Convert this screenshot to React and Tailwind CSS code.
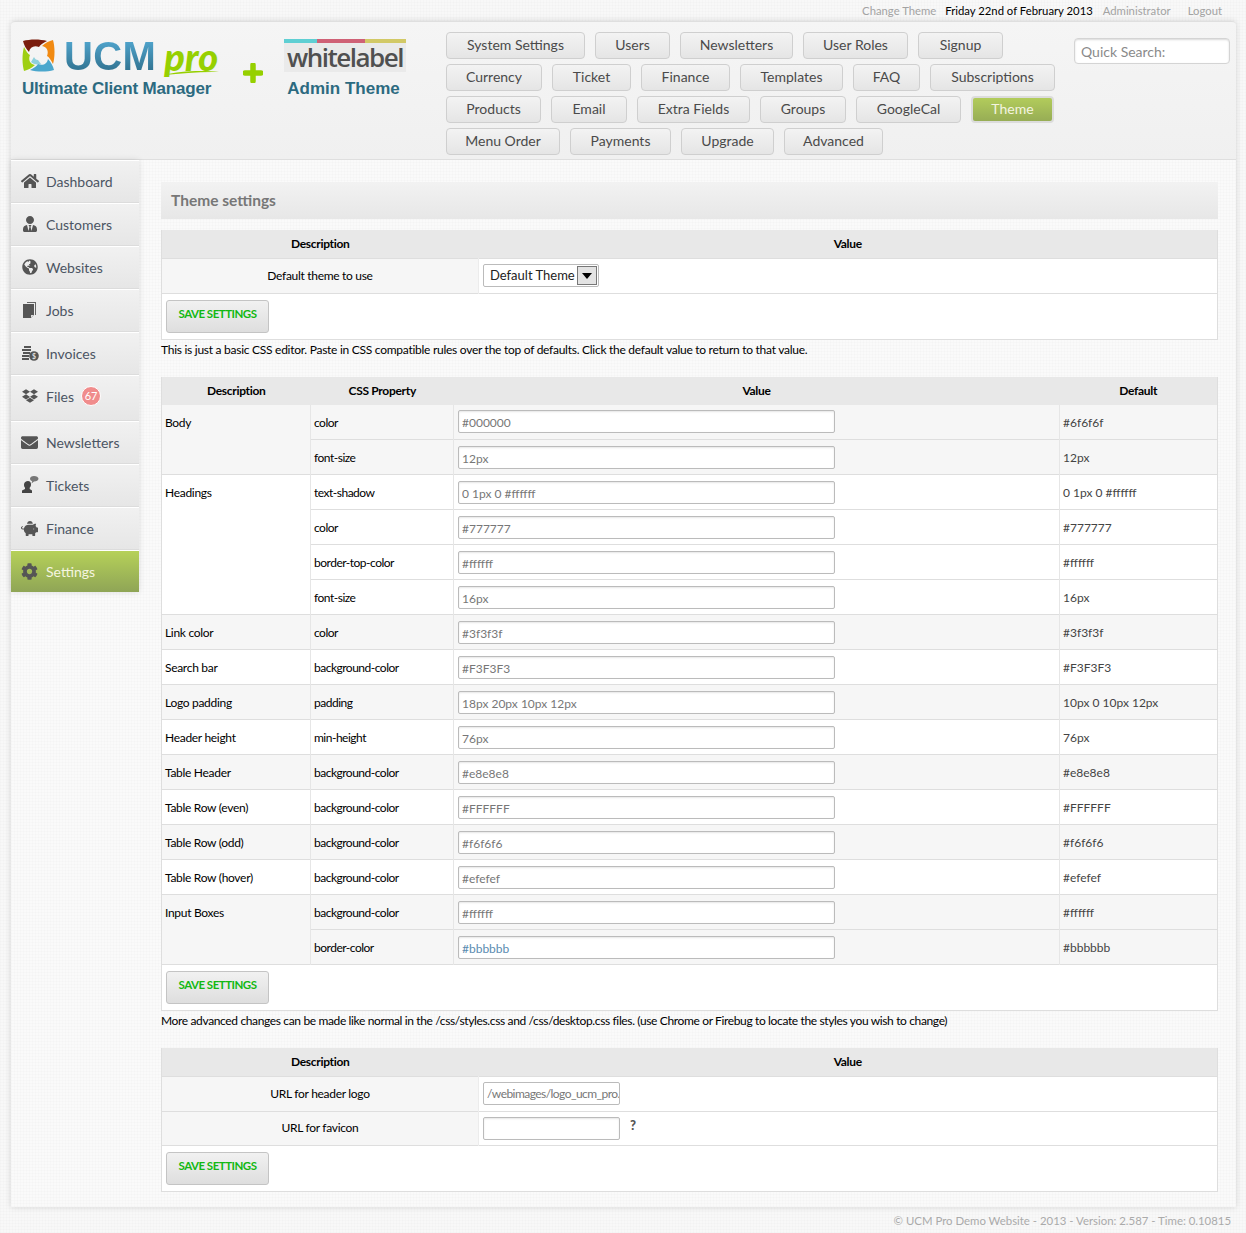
import React from 'react';
import { FaHome, FaUserTie, FaGlobeAmericas, FaDropbox, FaEnvelope, FaPiggyBank, FaCog } from 'react-icons/fa';

const weave = 'bg-[repeating-linear-gradient(0deg,rgba(0,0,0,0.012)_0,rgba(0,0,0,0.012)_1px,transparent_1px,transparent_3px),repeating-linear-gradient(90deg,rgba(0,0,0,0.012)_0,rgba(0,0,0,0.012)_1px,transparent_1px,transparent_3px)]';

const navRows = [
    [['System Settings', 139], ['Users', 75], ['Newsletters', 113], ['User Roles', 105], ['Signup', 85]],
    [['Currency', 96], ['Ticket', 79], ['Finance', 89], ['Templates', 103], ['FAQ', 67], ['Subscriptions', 125]],
    [['Products', 95], ['Email', 76], ['Extra Fields', 113], ['Groups', 86], ['GoogleCal', 105], ['Theme', 83]],
    [['Menu Order', 114], ['Payments', 101], ['Upgrade', 93], ['Advanced', 99]],
];

function JobsIcon() {
    return (
        <svg width="18" height="18" viewBox="0 0 18 18">
            <path d="M6 1h9v13h-1V2H6z" fill="#666" />
            <path d="M2 3h11v11l-3 3H2z" fill="#555" />
            <path d="M10 17v-3h3z" fill="#ddd" />
        </svg>
    );
}

function InvoicesIcon() {
    return (
        <svg width="18" height="16" viewBox="0 0 18 16">
            <path d="M3 1h7v2H3zM1 4h9v2H1zM2 7h7v2H2zM1 10h7v2H1zM1 13h7v2H1z" fill="#555" />
            <circle cx="13" cy="11" r="4.800" fill="#555" />
            <text x="13" y="13.500" textAnchor="middle" fontSize="7" fontWeight="bold" fill="#ddd">$</text>
        </svg>
    );
}

function TicketsIcon() {
    return (
        <svg width="18" height="18" viewBox="0 0 18 18">
            <path d="M7 5c2 0 3 1.500 3 3.500 0 1.500-.6 2.500-1.300 3.200V13l2.300 1.500V17H1v-2.500L4 13v-1.300C3.300 11 3 10 3 8.500 3 6.500 5 5 7 5z" fill="#444" />
            <path d="M13 0c2.500 0 4.500 1.200 4.500 2.800S15.500 5.600 13 5.600l-2.500 1.900.7-2.200C10 4.800 9 3.900 9 2.800 9 1.200 10.500 0 13 0z" fill="#777" />
        </svg>
    );
}

const sideItems = [
    ['Dashboard', <FaHome size={18} />],
    ['Customers', <FaUserTie size={16} />],
    ['Websites', <FaGlobeAmericas size={16} />],
    ['Jobs', <JobsIcon />],
    ['Invoices', <InvoicesIcon />],
    ['Files', <FaDropbox size={16} />],
    ['Newsletters', <FaEnvelope size={17} />],
    ['Tickets', <TicketsIcon />],
    ['Finance', <FaPiggyBank size={17} />],
    ['Settings', <FaCog size={17} />],
];

// last field: does this group get the grey stripe
const cssRows = [
    ['Body', 2, 'color', '#000000', '#6f6f6f', true],
    [null, 0, 'font-size', '12px', '12px', true],
    ['Headings', 4, 'text-shadow', '0 1px 0 #ffffff', '0 1px 0 #ffffff', false],
    [null, 0, 'color', '#777777', '#777777', false],
    [null, 0, 'border-top-color', '#ffffff', '#ffffff', false],
    [null, 0, 'font-size', '16px', '16px', false],
    ['Link color', 1, 'color', '#3f3f3f', '#3f3f3f', true],
    ['Search bar', 1, 'background-color', '#F3F3F3', '#F3F3F3', false],
    ['Logo padding', 1, 'padding', '18px 20px 10px 12px', '10px 0 10px 12px', true],
    ['Header height', 1, 'min-height', '76px', '76px', false],
    ['Table Header', 1, 'background-color', '#e8e8e8', '#e8e8e8', true],
    ['Table Row (even)', 1, 'background-color', '#FFFFFF', '#FFFFFF', false],
    ['Table Row (odd)', 1, 'background-color', '#f6f6f6', '#f6f6f6', true],
    ['Table Row (hover)', 1, 'background-color', '#efefef', '#efefef', false],
    ['Input Boxes', 2, 'background-color', '#ffffff', '#ffffff', true],
    [null, 0, 'border-color', '#bbbbbb', '#bbbbbb', true],
];

function SaveBox() {
    return (
        <div className="h-[46px] bg-white border-x border-b border-[#dedede] pl-[4px] pt-[6px]">
            <button className="w-[103px] h-[33px] pb-[5px] rounded-[3px] border border-[#c4c4c4] bg-gradient-to-b from-[#f1f1f1] to-[#dedede] text-[11.500px] font-bold text-[#13b813] tracking-[-0.5px]">
                SAVE SETTINGS
            </button>
        </div>
    );
}

function SettingsTable({ children }) {
    return (
        <table className="w-[1057px] table-fixed border-collapse border-x border-[#dedede] text-[12px] text-black">
            <colgroup>
                <col className="w-[317px]" />
                <col />
            </colgroup>
            <thead>
                <tr className="h-[28px] bg-[#e8e8e8]">
                    <th className="font-bold tracking-[-0.3px]">Description</th>
                    <th className="font-bold tracking-[-0.3px]">Value</th>
                </tr>
            </thead>
            <tbody>{children}</tbody>
        </table>
    );
}

function Swirl() {
    const arm = 'M1 2C8 0 18 0 25 2C21 4 18 6 17 8C12 6 8 8 7 13C4 10 2 6 1 2z';
    return (
        <svg width="33" height="33" viewBox="0 0 33 33" className="shrink-0">
            <path d="M9 23c2 2 6 3 10 2l-3-4c-2 0-3-1-4-3z" fill="#8fd0dc" />
            <path d={arm} fill="#7a1d0d" />
            <path d={arm} fill="#f18a12" transform="rotate(90 16.500 16.500)" />
            <path d={arm} fill="#4ba7cd" transform="rotate(180 16.500 16.500)" />
            <path d={arm} fill="#9fcf13" transform="rotate(270 16.500 16.500)" />
        </svg>
    );
}

export default function App() {
    return (
        <div className={`w-[1246px] h-[1233px] bg-[#f8f8f8] ${weave} font-['Lato','Noto_Sans',sans-serif] text-[#444]`}>
            <div className="h-[21px] pt-[1px] flex justify-end items-center pr-[24px] text-[11.300px] text-[#a3a3a3]">
                <span>Change Theme</span>
                <span className="ml-[9px] text-black">Friday 22nd of February 2013</span>
                <span className="ml-[10px]">Administrator</span>
                <span className="ml-[17px]">Logout</span>
            </div>

            <div className={`ml-[11px] w-[1225px] h-[1186px] rounded-t-[4px] bg-[#fafafa] ${weave} shadow-[0_0_6px_rgba(0,0,0,0.14)]`}>
                <header className="h-[139px] flex rounded-t-[4px] border-t border-b border-[#dfdfdf] bg-gradient-to-b from-[#f5f5f5] to-[#f0f0f0]">
                    <div className="w-[435px] flex pt-[17px] pl-[11px]">
                        <div className="w-[200px] shrink-0">
                            <div className="flex items-center h-[33px]">
                                <Swirl />
                                <span className="ml-[9px] text-[40px] leading-none font-['Liberation_Sans'] font-bold tracking-[0.4px] text-transparent bg-clip-text bg-gradient-to-b from-[#55acd6] to-[#2d6c88]">UCM</span>
                                <span className="relative ml-[8px] text-[38px] leading-none font-['Lato'] italic font-black text-[#96d000]">
                                    pro
                                    <svg width="56" height="6" viewBox="0 0 56 6" className="absolute left-0 top-[33px]">
                                        <path d="M0 5C15 1 38 0 55 2C38 1.500 18 3 0 5z" fill="#96d000" />
                                    </svg>
                                </span>
                            </div>
                            <div className="mt-[7px] text-[17px] leading-[20px] font-['Liberation_Sans'] font-bold text-[#2c6a80] tracking-[-0.2px] whitespace-nowrap">Ultimate Client Manager</div>
                        </div>
                        <svg width="20" height="20" viewBox="0 0 20 20" className="ml-[21px] mt-[24px] shrink-0">
                            <path d="M10 2v16M2 10h16" stroke="#96d000" strokeWidth="5.500" strokeLinecap="round" />
                        </svg>
                        <div className="ml-[21px] w-[122px] shrink-0">
                            <div className="flex h-[4px]">
                                <div className="w-[33px] bg-[#5fcfd3]" />
                                <div className="w-[48px] bg-[#cf6176]" />
                                <div className="w-[41px] bg-[#d2c966]" />
                            </div>
                            <div className="h-[29px] bg-[#eaeaea] text-center text-[26px] leading-[28px] font-['Open_Sans'] font-semibold text-[#505050] tracking-[-1.500px]">whitelabel</div>
                            <div className="mt-[7px] pr-[3px] text-center text-[17px] leading-[20px] font-['Liberation_Sans'] font-bold text-[#2c6a80]">Admin Theme</div>
                        </div>
                    </div>

                    <nav className="w-[612px] pt-[10px] flex flex-col gap-[5px]">
                        {navRows.map((row, i) => (
                            <div key={i} className="flex gap-[10px]">
                                {row.map(([label, w]) => (
                                    label === 'Theme' ? (
                                        <button key={label} className="h-[27px] pb-[3px] rounded-[4px] border-2 border-[#dcdcdc] bg-gradient-to-b from-[#b2cc5b] to-[#97ad55] text-[14px] text-[#f4f4e0]" style={{ width: w }}>
                                            {label}
                                        </button>
                                    ) : (
                                        <button key={label} className="h-[27px] pb-[3px] rounded-[4px] border border-[#cfcfcf] bg-gradient-to-b from-[#f3f3f3] to-[#e5e5e5] text-[14px] text-[#4a4a4a]" style={{ width: w }}>
                                            {label}
                                        </button>
                                    )
                                ))}
                            </div>
                        ))}
                    </nav>

                    <div className="ml-[16px] pt-[16px]">
                        <div className="w-[156px] h-[26px] rounded-[4px] bg-white border border-[#d4d4d4] shadow-[inset_0_1px_2px_rgba(0,0,0,0.15)] pl-[6px] text-[14px] leading-[26px] text-[#8a8a8a]">
                            Quick Search:
                        </div>
                    </div>
                </header>

                <div className="flex">
                    <aside className="w-[128px] shrink-0 shadow-[0_0_6px_rgba(0,0,0,0.12)] self-start">
                        {sideItems.map(([label, icon]) => {
                            if (label === 'Settings') {
                                return (
                                    <div key={label} className="h-[42px] flex items-center border-t border-t-white bg-gradient-to-b from-[#b6d158] to-[#8fa556] text-[#f5f5e0] text-[14px]">
                                        <span className="w-[35px] flex justify-center pl-[2px] text-[#555]">{icon}</span>
                                        <span>{label}</span>
                                    </div>
                                );
                            }
                            return (
                                <div key={label} className={label === 'Files'
                                    ? 'h-[46px] pb-[5px] flex items-center border-t border-t-white bg-gradient-to-b from-[#f1f1f1] to-[#e6e6e6] text-[#4b5563] text-[14px] shadow-[inset_0_-1px_0_#dcdcdc]'
                                    : 'h-[43px] pb-[2px] flex items-center border-t border-t-white bg-gradient-to-b from-[#f1f1f1] to-[#e6e6e6] text-[#4b5563] text-[14px] shadow-[inset_0_-1px_0_#dcdcdc]'}>
                                    <span className="w-[35px] flex justify-center pl-[2px] text-[#555]">{icon}</span>
                                    <span>{label}</span>
                                    {label === 'Files' && (
                                        <span className="ml-[7px] w-[20px] h-[20px] rounded-full border border-white bg-[#f08c8c] text-white text-[11px] leading-[18px] text-center">67</span>
                                    )}
                                </div>
                            );
                        })}
                    </aside>

                    <main className="ml-[22px] w-[1057px] pt-[22px]">
                        <h2 className="h-[37px] pl-[10px] bg-gradient-to-b from-[#f2f2f2] to-[#e7e7e7] text-[15.500px] font-bold leading-[37px] text-[#777]">Theme settings</h2>

                        <div className="mt-[11px]">
                            <SettingsTable>
                                <tr className="h-[35px] border-y border-[#dedede]">
                                    <td className="bg-[#f6f6f6] text-center tracking-[-0.3px] border-r border-[#ececec]">Default theme to use</td>
                                    <td className="bg-white pl-[4px]">
                                        <div className="w-[116px] h-[23px] flex items-center justify-between pl-[6px] pr-[1px] rounded-[2px] bg-white border border-[#bbb] text-[13px] text-[#222] whitespace-nowrap">
                                            Default Theme
                                            <span className="w-[20px] h-[19px] flex items-center justify-center bg-[#e3e3e3] border border-[#777]">
                                                <span className="border-x-[5px] border-x-transparent border-t-[6px] border-t-black" />
                                            </span>
                                        </div>
                                    </td>
                                </tr>
                            </SettingsTable>
                            <SaveBox />
                        </div>

                        <p className="mt-[1px] h-[17px] text-[12px] leading-[17px] text-black whitespace-nowrap tracking-[-0.27px]">This is just a basic CSS editor. Paste in CSS compatible rules over the top of defaults. Click the default value to return to that value.</p>

                        <table className="mt-[19px] w-[1057px] table-fixed border-collapse border-x border-[#dedede] text-[12px] text-black">
                            <colgroup>
                                <col className="w-[149px]" />
                                <col className="w-[143px]" />
                                <col className="w-[606px]" />
                                <col />
                            </colgroup>
                            <thead>
                                <tr className="h-[28px] bg-[#e8e8e8]">
                                    <th className="font-bold tracking-[-0.3px]">Description</th>
                                    <th className="font-bold tracking-[-0.3px] text-left pl-[38px]">CSS Property</th>
                                    <th className="font-bold tracking-[-0.3px]">Value</th>
                                    <th className="font-bold tracking-[-0.3px]">Default</th>
                                </tr>
                            </thead>
                            <tbody>
                                {cssRows.map(([group, span, prop, value, def, grey], i) => (
                                    <tr key={i} className={grey ? 'h-[35px] bg-[#f6f6f6] border-b border-[#dedede]' : 'h-[35px] bg-white border-b border-[#dedede]'}>
                                        {span > 0 && (
                                            <td rowSpan={span} className="align-top pt-[9px] pl-[3px] tracking-[-0.3px] border-r border-[#e6e6e6]">{group}</td>
                                        )}
                                        <td className="pl-[3px] pt-[2px] tracking-[-0.5px] border-r border-[#e6e6e6]">{prop}</td>
                                        <td className="pl-[4px] border-r border-[#e6e6e6]">
                                            <input
                                                readOnly
                                                value={value}
                                                className={prop === 'border-color'
                                                    ? 'block w-[377px] h-[23px] pt-[2px] rounded-[2px] bg-white border border-[#bbb] shadow-[inset_0_1px_2px_rgba(0,0,0,0.1)] pl-[3px] text-[#5a8bb0]'
                                                    : 'block w-[377px] h-[23px] pt-[2px] rounded-[2px] bg-white border border-[#bbb] shadow-[inset_0_1px_2px_rgba(0,0,0,0.1)] pl-[3px] text-[#777]'}
                                            />
                                        </td>
                                        <td className="pl-[3px] pt-[2px] text-[#444]">{def}</td>
                                    </tr>
                                ))}
                            </tbody>
                        </table>
                        <SaveBox />

                        <p className="mt-[1px] h-[17px] text-[12px] leading-[17px] text-black whitespace-nowrap tracking-[-0.36px]">More advanced changes can be made like normal in the /css/styles.css and /css/desktop.css files. (use Chrome or Firebug to locate the styles you wish to change)</p>

                        <div className="mt-[19px]">
                            <SettingsTable>
                                <tr className="h-[35px] border-y border-[#dedede]">
                                    <td className="bg-[#f6f6f6] text-center tracking-[-0.3px] border-r border-[#ececec]">URL for header logo</td>
                                    <td className="bg-white pl-[4px]">
                                        <input
                                            readOnly
                                            value="/webimages/logo_ucm_pro.png"
                                            className="block w-[137px] h-[23px] rounded-[2px] bg-white border border-[#bbb] pl-[3px] tracking-[-0.55px] text-[#777]"
                                        />
                                    </td>
                                </tr>
                                <tr className="h-[34px] border-b border-[#dedede]">
                                    <td className="bg-[#f6f6f6] text-center tracking-[-0.3px] border-r border-[#ececec]">URL for favicon</td>
                                    <td className="bg-white pl-[4px]">
                                        <div className="flex">
                                            <input readOnly className="block w-[137px] h-[23px] rounded-[2px] bg-white border border-[#bbb] shadow-[inset_0_1px_2px_rgba(0,0,0,0.1)]" />
                                            <span className="ml-[10px] -mt-[1px] text-[13px] font-black text-[#555]">?</span>
                                        </div>
                                    </td>
                                </tr>
                            </SettingsTable>
                            <SaveBox />
                        </div>
                    </main>
                </div>
            </div>

            <footer className="h-[26px] pt-[2px] pr-[15px] flex items-center justify-end text-[11.400px] text-[#aaa]">© UCM Pro Demo Website - 2013 - Version: 2.587 - Time: 0.10815</footer>
        </div>
    );
}
